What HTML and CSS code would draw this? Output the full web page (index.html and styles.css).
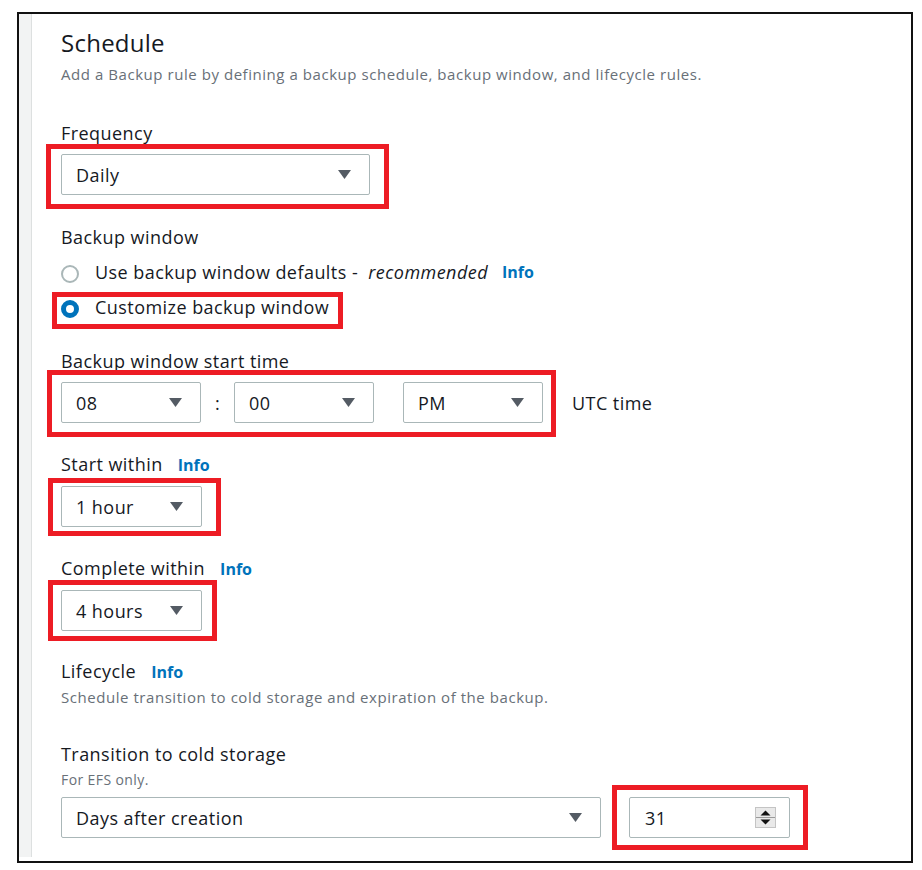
FILE: index.html
```html
<!DOCTYPE html>
<html lang="en">
<head>
    <meta charset="UTF-8">
    <meta name="viewport" content="width=device-width, initial-scale=1.0">
    <title>Backup rule - Schedule</title>
    <link rel="stylesheet" href="styles.css">
</head>
<body>
    <div class="frame">
        <div class="rail"></div>
        <div class="panel">
            <h2 class="title">Schedule</h2>
            <p class="desc">Add a Backup rule by defining a backup schedule, backup window, and lifecycle rules.</p>

            <div class="field field-frequency">
                <div class="label">Frequency</div>
                <div class="control">
                    <div class="mark mark-frequency">
                        <div class="select select-frequency">
                            <span>Daily</span>
                            <svg class="caret" width="13" height="9" viewBox="0 0 13 9"><path d="M0 0h13L6.5 9z"/></svg>
                        </div>
                    </div>
                </div>
            </div>

            <div class="field field-window">
                <div class="label">Backup window</div>
                <div class="radios">
                    <div class="radio">
                        <span class="dot"></span>
                        <span>Use backup window defaults - <em>recommended</em></span>
                        <span class="info">Info</span>
                    </div>
                    <div class="mark mark-radio">
                        <div class="radio">
                            <span class="dot dot-on"></span>
                            <span>Customize backup window</span>
                        </div>
                    </div>
                </div>
            </div>

            <div class="field field-time">
                <div class="label">Backup window start time</div>
                <div class="control time-row">
                    <div class="mark mark-time">
                        <div class="select select-time">
                            <span>08</span>
                            <svg class="caret" width="13" height="9" viewBox="0 0 13 9"><path d="M0 0h13L6.5 9z"/></svg>
                        </div>
                        <span class="colon">:</span>
                        <div class="select select-time">
                            <span>00</span>
                            <svg class="caret" width="13" height="9" viewBox="0 0 13 9"><path d="M0 0h13L6.5 9z"/></svg>
                        </div>
                        <div class="select select-time select-ampm">
                            <span>PM</span>
                            <svg class="caret" width="13" height="9" viewBox="0 0 13 9"><path d="M0 0h13L6.5 9z"/></svg>
                        </div>
                    </div>
                    <span class="utc">UTC time</span>
                </div>
            </div>

            <div class="field">
                <div class="label">Start within <span class="info">Info</span></div>
                <div class="control">
                    <div class="mark mark-start">
                        <div class="select select-small">
                            <span>1 hour</span>
                            <svg class="caret" width="13" height="9" viewBox="0 0 13 9"><path d="M0 0h13L6.5 9z"/></svg>
                        </div>
                    </div>
                </div>
            </div>

            <div class="field">
                <div class="label">Complete within <span class="info">Info</span></div>
                <div class="control">
                    <div class="mark mark-complete">
                        <div class="select select-small">
                            <span>4 hours</span>
                            <svg class="caret" width="13" height="9" viewBox="0 0 13 9"><path d="M0 0h13L6.5 9z"/></svg>
                        </div>
                    </div>
                </div>
            </div>

            <div class="field field-lifecycle">
                <div class="label">Lifecycle <span class="info">Info</span></div>
                <p class="hint">Schedule transition to cold storage and expiration of the backup.</p>
            </div>

            <div class="field field-cold">
                <div class="label">Transition to cold storage</div>
                <p class="hint hint-small">For EFS only.</p>
                <div class="control cold-row">
                    <div class="select select-days">
                        <span>Days after creation</span>
                        <svg class="caret" width="13" height="9" viewBox="0 0 13 9"><path d="M0 0h13L6.5 9z"/></svg>
                    </div>
                    <div class="mark mark-days">
                        <div class="number">
                            <span>31</span>
                            <svg class="spinner" width="21" height="21" viewBox="0 0 21 21">
                                <rect x="0.5" y="0.5" width="20" height="20" fill="#e9e9e9" stroke="#c4c4c4"/>
                                <line x1="1" y1="10.5" x2="20" y2="10.5" stroke="#9a9a9a"/>
                                <path d="M5.5 8.5h10L10.5 3.5z" fill="#111"/>
                                <path d="M5.5 12.5h10L10.5 17.5z" fill="#111"/>
                            </svg>
                        </div>
                    </div>
                </div>
            </div>
        </div>
    </div>
</body>
</html>
```

FILE: styles.css
```css
* {
    box-sizing: border-box;
}
body {
    margin: 0;
    background-color: #ffffff;
    font-family: "Open Sans", "Noto Sans", Arial, sans-serif;
    letter-spacing: 0.45px;
    color: #16191f;
}
.frame {
    display: flex;
    width: 896px;
    height: 851px;
    margin: 12px 0 0 17px;
    border: 2px solid #111111;
    overflow: hidden;
}
.rail {
    width: 13px;
    margin-bottom: 4px;
    background-color: #f2f3f3;
    border-right: 1px solid #dde0e0;
}
.panel {
    flex: 1;
    padding: 14px 0 0 29px;
}
.title {
    margin: 0;
    font-size: 24px;
    line-height: 30px;
    font-weight: 400;
    letter-spacing: 0.25px;
}
.desc {
    margin: 6px 0 0;
    font-size: 15px;
    line-height: 20px;
    letter-spacing: 0.55px;
    color: #687078;
}
.field {
    margin-top: 29px;
}
.field-frequency {
    margin-top: 37px;
}
.field-window {
    margin-top: 30px;
}
.field-time {
    margin-top: 30px;
}
.field-lifecycle {
    margin-top: 28px;
}
.field-cold {
    margin-top: 35px;
}
.label {
    font-size: 18px;
    line-height: 24px;
}
.info {
    margin-left: 10px;
    font-size: 16px;
    font-weight: 700;
    letter-spacing: 0;
    color: #0073bb;
}
.hint {
    margin: 3px 0 0;
    font-size: 15px;
    line-height: 20px;
    letter-spacing: 0.55px;
    color: #687078;
}
.hint-small {
    margin-top: 5px;
    font-size: 14px;
    line-height: 18px;
    letter-spacing: 0.4px;
}
.control {
    display: flex;
    align-items: center;
    margin-top: 9px;
}
.cold-row {
    margin-top: 8px;
    gap: 28px;
}

/* selects */
.select {
    display: flex;
    align-items: center;
    justify-content: space-between;
    height: 41px;
    padding: 0 18px 0 14px;
    border: 1px solid #aab7b8;
    border-radius: 2px;
    background-color: #ffffff;
    font-size: 18px;
    line-height: 24px;
}
.caret {
    fill: #545b64;
}
.select-frequency {
    width: 309px;
}
.select-time {
    width: 140px;
}
.select-ampm {
    margin-left: 29px;
}
.select-small {
    width: 141px;
}
.select-days {
    width: 540px;
}
.colon {
    width: 33px;
    text-align: center;
    font-size: 18px;
}
.utc {
    margin-left: 29px;
    font-size: 18px;
}
.number {
    display: flex;
    align-items: center;
    justify-content: space-between;
    width: 161px;
    height: 41px;
    padding: 0 13px 0 15px;
    border: 1px solid #aab7b8;
    border-radius: 2px;
    font-size: 18px;
}

/* radios */
.radios {
    display: flex;
    flex-direction: column;
    gap: 11px;
    margin-top: 11px;
}
.radio {
    display: flex;
    align-items: center;
    font-size: 18px;
    line-height: 24px;
}
.dot {
    width: 18px;
    height: 18px;
    margin: 3px 16px 0 0;
    border: 2px solid #aab7b8;
    border-radius: 50%;
}
.dot-on {
    border: 5px solid #0073bb;
}
.radio em {
    margin-left: 5px;
    font-style: italic;
}
.radio .info {
    margin-left: 14px;
}

/* red annotation boxes */
.mark {
    position: relative;
    display: flex;
    align-items: center;
    width: fit-content;
}
.mark::after {
    content: "";
    position: absolute;
    border: 5px solid #ed1c24;
    pointer-events: none;
}
.mark-frequency::after {
    inset: -10px -19px -14px -15px;
}
.mark-radio::after {
    inset: -3px -14px -10px -9px;
}
.mark-time::after {
    inset: -12px -13px -14px -14px;
}
.mark-start::after {
    inset: -8px -19px -9px -13px;
}
.mark-complete::after {
    inset: -10px -15px -10px -13px;
}
.mark-days::after {
    inset: -12px -18px -12px -17px;
}
```
